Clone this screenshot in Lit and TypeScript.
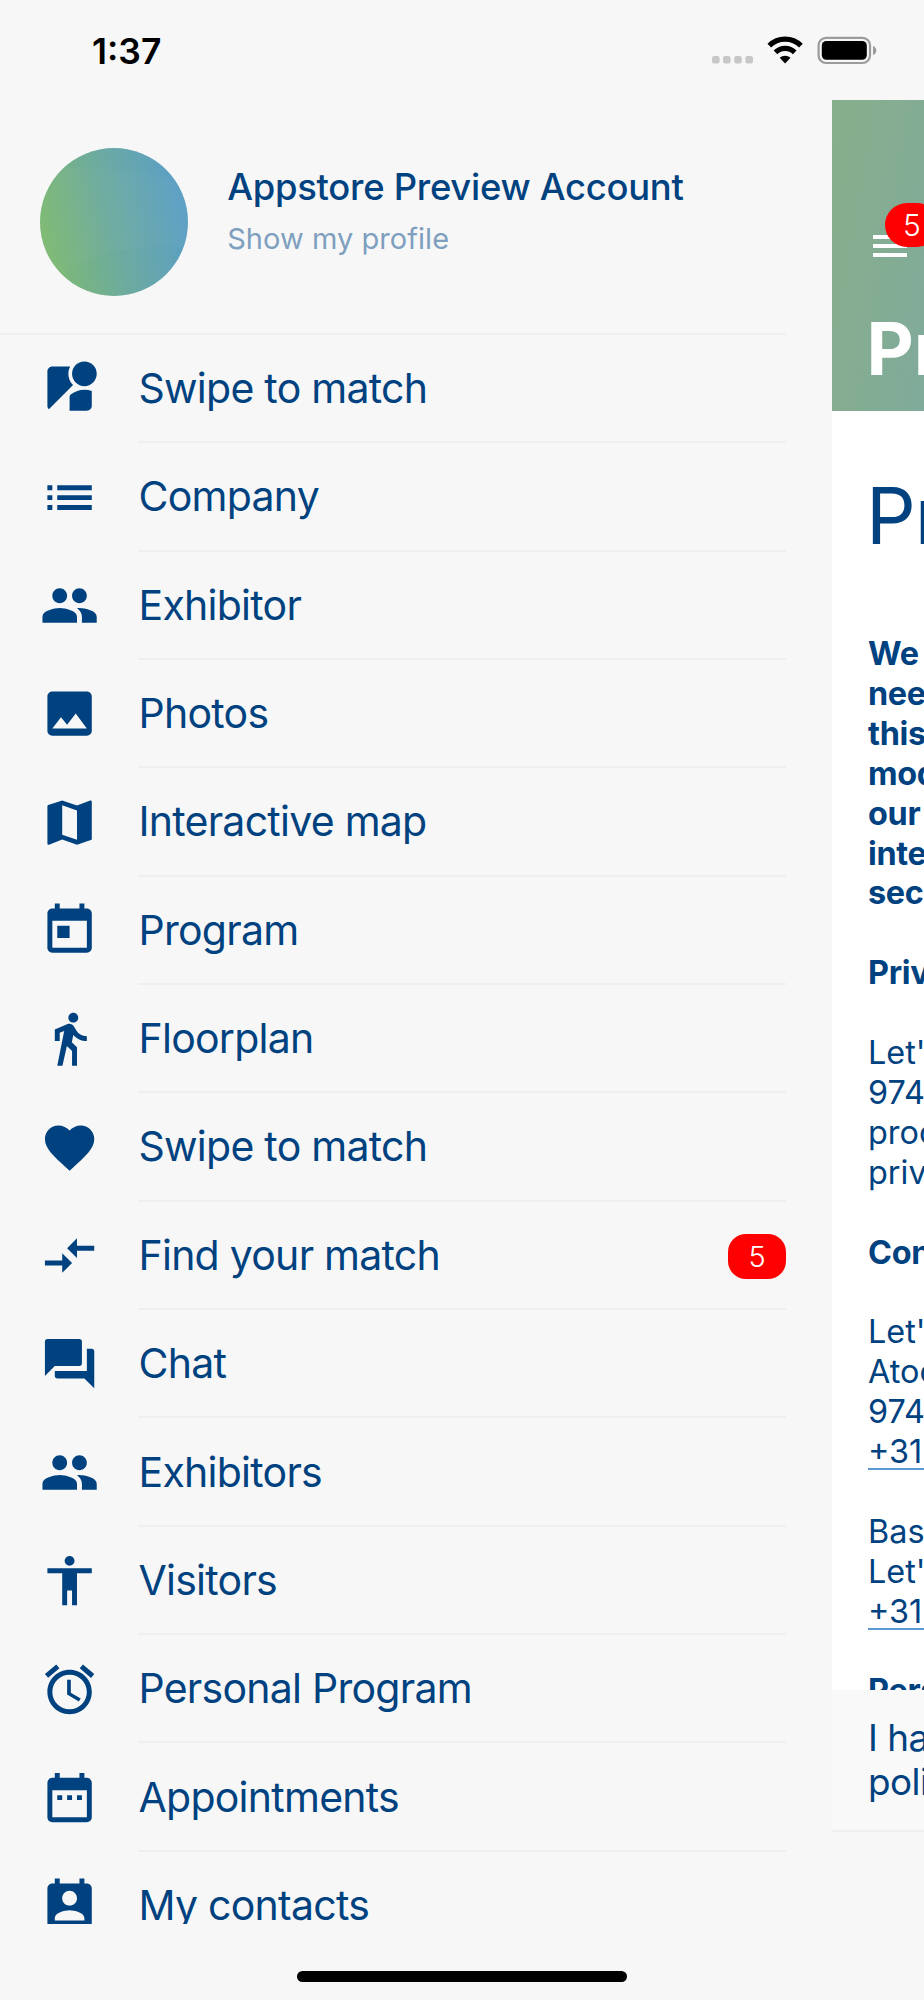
import { LitElement, html, css, svg } from "lit";
import { customElement } from "lit/decorators.js";

type Item = { label: string; icon: string; badge?: string };

const ICONS: Record<string, string> = {
  streetview:
    "M12.56 14.33c-.34.27-.56.7-.56 1.17V21h7c1.1 0 2-.9 2-2v-5.98c-.94-.33-1.95-.52-3-.52-2.03 0-3.93.7-5.44 1.83zM18 1a5 5 0 1 0 0 10a5 5 0 1 0 0-10zM11.5 6c0-1.08.27-2.1.74-3H5c-1.1 0-2 .9-2 2v14c0 .55.23 1.05.59 1.41l9.82-9.82C12.23 9.42 11.5 7.8 11.5 6z",
  list: "M3 13h2v-2H3v2zm0 4h2v-2H3v2zm0-8h2V7H3v2zm4 4h14v-2H7v2zm0 4h14v-2H7v2zM7 7v2h14V7H7z",
  people:
    "M16 11c1.66 0 2.99-1.34 2.99-3S17.66 5 16 5c-1.66 0-3 1.34-3 3s1.34 3 3 3zm-8 0c1.66 0 2.99-1.34 2.99-3S9.66 5 8 5C6.34 5 5 6.34 5 8s1.34 3 3 3zm0 2c-2.33 0-7 1.17-7 3.5V19h14v-2.5c0-2.33-4.67-3.5-7-3.5zm8 0c-.29 0-.62.02-.97.05 1.16.84 1.97 1.97 1.97 3.45V19h6v-2.5c0-2.33-4.67-3.5-7-3.5z",
  image:
    "M21 19V5c0-1.1-.9-2-2-2H5c-1.1 0-2 .9-2 2v14c0 1.1.9 2 2 2h14c1.1 0 2-.9 2-2zM8.5 13.5l2.5 3.01L14.5 12l4.5 6H5l3.5-4.5z",
  map: "M20.5 3l-.16.03L15 5.1 9 3 3.36 4.9c-.21.07-.36.25-.36.48V20.5c0 .28.22.5.5.5l.16-.03L9 18.9l6 2.1 5.64-1.9c.21-.07.36-.25.36-.48V3.5c0-.28-.22-.5-.5-.5zM15 19l-6-2.11V5l6 2.11V19z",
  today:
    "M19 3h-1V1h-2v2H8V1H6v2H5c-1.11 0-1.99.9-1.99 2L3 19c0 1.1.89 2 2 2h14c1.1 0 2-.9 2-2V5c0-1.1-.9-2-2-2zm0 16H5V8h14v11zM7 10h5v5H7z",
  walk: "M13.5 5.5c1.1 0 2-.9 2-2s-.9-2-2-2-2 .9-2 2 .9 2 2 2zM9.8 8.9L7 23h2.1l1.8-8 2.1 2v6h2v-7.5l-2.1-2 .6-3C14.8 12 16.8 13 19 13v-2c-1.9 0-3.5-1-4.3-2.4l-1-1.6c-.4-.6-1-1-1.7-1-.3 0-.5.1-.8.1L6 8.3V13h2V9.6l1.8-.7",
  heart:
    "M12 21.35l-1.45-1.32C5.4 15.36 2 12.28 2 8.5 2 5.42 4.42 3 7.5 3c1.74 0 3.41.81 4.5 2.09C13.09 3.81 14.76 3 16.5 3 19.58 3 22 5.42 22 8.5c0 3.78-3.4 6.86-8.55 11.54L12 21.35z",
  compare: "M9.01 14H2v2h7.01v3L13 15l-3.99-4v3zm5.98-1v-3H22V8h-7.01V5L11 9l3.99 4z",
  chat: "M21 6h-2v9H6v2c0 .55.45 1 1 1h11l4 4V7c0-.55-.45-1-1-1zm-4 6V3c0-.55-.45-1-1-1H3c-.55 0-1 .45-1 1v14l4-4h10c.55 0 1-.45 1-1z",
  person:
    "M12 2c1.1 0 2 .9 2 2s-.9 2-2 2-2-.9-2-2 .9-2 2-2zm9 7h-6v13h-2v-6h-2v6H9V9H3V7h18v2z",
  alarm:
    "M22 5.72l-4.6-3.86-1.29 1.53 4.6 3.86L22 5.72zM7.88 3.39L6.6 1.86 2 5.71l1.29 1.53 4.59-3.85zM12.5 8H11v6l4.75 2.85.75-1.23-4-2.37V8zM12 4c-4.97 0-9 4.03-9 9s4.02 9 9 9c4.97 0 9-4.03 9-9s-4.03-9-9-9zm0 16c-3.87 0-7-3.13-7-7s3.13-7 7-7 7 3.13 7 7-3.13 7-7 7z",
  dates:
    "M9 11H7v2h2v-2zm4 0h-2v2h2v-2zm4 0h-2v2h2v-2zm2-7h-1V2h-2v2H8V2H6v2H5c-1.11 0-1.99.9-1.99 2L3 20c0 1.1.89 2 2 2h14c1.1 0 2-.9 2-2V6c0-1.1-.9-2-2-2zm0 16H5V9h14v11z",
  contact:
    "M19 3h-1V1h-2v2H8V1H6v2H5c-1.11 0-2 .9-2 2v14c0 1.1.89 2 2 2h14c1.1 0 2-.9 2-2V5c0-1.1-.9-2-2-2zm-7 3c1.66 0 3 1.34 3 3s-1.34 3-3 3-3-1.34-3-3 1.34-3 3-3zm6 12H6v-1c0-2 4-3.1 6-3.1s6 1.1 6 3.1v1z",
};

const ITEMS: Item[] = [
  { label: "Swipe to match", icon: "streetview" },
  { label: "Company", icon: "list" },
  { label: "Exhibitor", icon: "people" },
  { label: "Photos", icon: "image" },
  { label: "Interactive map", icon: "map" },
  { label: "Program", icon: "today" },
  { label: "Floorplan", icon: "walk" },
  { label: "Swipe to match", icon: "heart" },
  { label: "Find your match", icon: "compare", badge: "5" },
  { label: "Chat", icon: "chat" },
  { label: "Exhibitors", icon: "people" },
  { label: "Visitors", icon: "person" },
  { label: "Personal Program", icon: "alarm" },
  { label: "Appointments", icon: "dates" },
  { label: "My contacts", icon: "contact" },
];

@customElement("status-bar")
class StatusBar extends LitElement {
  static styles = css`
    :host {
      display: flex;
      justify-content: space-between;
      height: 100px;
      box-sizing: border-box;
      padding: 30px 47px 0 92px;
    }
    .time {
      font-size: 35.5px;
      line-height: 43px;
      font-weight: 600;
      color: #000;
    }
    .status {
      display: block;
      width: 166px;
      height: 42px;
    }
  `;
  render() {
    return html`
      <span class="time">1:37</span>
      <svg class="status" viewBox="711 30 166 42">
        ${[712, 723, 734.2, 745.4].map(
          (x) => svg`<rect x=${x} y="56" width="7.6" height="7.4" rx="2.2" fill="#c7c7c7" />`
        )}
        <g fill="none" stroke="#000" stroke-width="5.2">
          <path d="M769.3 45.7a22.5 22.5 0 0 1 31.6 0" />
          <path d="M775.5 52.4a13.7 13.7 0 0 1 19.2 0" />
        </g>
        <path d="M785.1 63.4l-5.4-5.6a7.8 7.8 0 0 1 10.8 0z" />
        <rect x="818.6" y="37.8" width="51.4" height="25.2" rx="7.5" fill="none" stroke="#9b9b9b" stroke-width="2.2" />
        <rect x="821.8" y="41" width="45" height="18.8" rx="4.6" />
        <path d="M873 46c4.4 1.5 4.4 7.5 0 9z" fill="#9b9b9b" />
      </svg>
    `;
  }
}

@customElement("side-menu")
class SideMenu extends LitElement {
  static styles = css`
    :host {
      display: block;
      width: 786px;
      height: 1824px;
      overflow: hidden;
      color: #00427f;
    }
    .profile {
      display: flex;
      align-items: center;
      gap: 39.4px;
      box-sizing: border-box;
      width: 786px;
      height: 232.8px;
      padding: 11px 0 0 39.8px;
    }
    .avatar {
      flex: none;
      width: 148px;
      height: 148px;
    }
    .who {
      display: flex;
      flex-direction: column;
      gap: 7px;
      padding-bottom: 19px;
    }
    .name {
      font-size: 36.4px;
      line-height: 46px;
      font-weight: 500;
      letter-spacing: -0.26px;
    }
    .link {
      font-size: 29px;
      line-height: 44px;
      letter-spacing: 0.05px;
      color: #7f9fbf;
    }
    .item {
      display: flex;
      box-sizing: border-box;
      width: 786px;
      height: 108.36px;
      padding-left: 40px;
    }
    .icon {
      flex: none;
      width: 59.2px;
      height: 59.2px;
      margin: 26.4px 39.3px 0 0;
      fill: currentColor;
    }
    .cell {
      display: flex;
      align-items: center;
      justify-content: space-between;
      flex: none;
      width: 647.5px;
      box-sizing: border-box;
      border-top: 2px solid #efefef;
      font-size: 41px;
      line-height: 50px;
      letter-spacing: -0.74px;
    }
    .item:first-of-type .cell {
      border-top-color: transparent;
    }
    .rule {
      width: 786px;
      height: 2px;
      margin-bottom: -2px;
      background: #efefef;
    }
    .badge {
      width: 58px;
      height: 45px;
      margin-top: 3px;
      border-radius: 18px;
      background: #f00;
      color: #fff;
      font-size: 29px;
      font-weight: 350;
      line-height: 46px;
      text-align: center;
      letter-spacing: 0;
    }
  `;
  render() {
    return html`
      <header class="profile">
        <svg class="avatar" viewBox="0 0 148 148">
          <defs>
            <linearGradient id="fill" x1="0" y1="0.62" x2="1" y2="0.38">
              <stop offset="0.04" stop-color="#7cb974" />
              <stop offset="0.48" stop-color="#6dab9f" />
              <stop offset="0.96" stop-color="#5c9fc4" />
            </linearGradient>
            <clipPath id="round"><circle cx="74" cy="74" r="74" /></clipPath>
          </defs>
          <g clip-path="url(#round)">
            <rect width="148" height="148" fill="url(#fill)" />
            <path d="M0 22C50 16 100 20 148 38V100C110 94 60 104 30 120L0 148z" fill="#fff" opacity="0.025" />
          </g>
        </svg>
        <div class="who">
          <span class="name">Appstore Preview Account</span>
          <span class="link">Show my profile</span>
        </div>
      </header>
      <div class="rule"></div>
      <nav>
        ${ITEMS.map(
          (i) => html`<div class="item">
            <svg class="icon" viewBox="0 0 24 24"><path d=${ICONS[i.icon]} /></svg>
            <div class="cell">
              <span>${i.label}</span>
              ${i.badge ? html`<span class="badge">${i.badge}</span>` : ""}
            </div>
          </div>`
        )}
      </nav>
    `;
  }
}

@customElement("policy-page")
class PolicyPage extends LitElement {
  static styles = css`
    :host {
      display: flex;
      flex-direction: column;
      width: 92px;
      height: 1732px;
      overflow: hidden;
      white-space: nowrap;
      color: #00427f;
      background: #fff;
    }
    .bar {
      position: relative;
      flex: none;
      box-sizing: border-box;
      height: 311px;
      padding: 135px 0 0 40.5px;
      color: #fff;
      background: linear-gradient(100deg, #87af8b, #80aa9a);
    }
    .burger {
      display: flex;
      flex-direction: column;
      gap: 5px;
      width: 34px;
    }
    .burger span {
      height: 4px;
      background: #fff;
    }
    .badge {
      position: absolute;
      left: 53px;
      top: 102.5px;
      width: 54px;
      height: 44px;
      border-radius: 22px;
      background: #f00;
      font-size: 30px;
      font-weight: 350;
      line-height: 45px;
      text-align: center;
    }
    .title {
      margin: 46.5px 0 0 -6px;
      font-size: 73px;
      line-height: 90px;
      font-weight: 700;
    }
    .body {
      flex: 1;
      overflow: hidden;
      padding-left: 36px;
      font-size: 32.4px;
      line-height: 39.9px;
    }
    .heading {
      margin: 57px 0 70px -2px;
      font-size: 78px;
      line-height: 96px;
      font-weight: 400;
      letter-spacing: -1px;
    }
    p {
      margin: 0 0 39.9px;
    }
    .strong {
      font-weight: 700;
      letter-spacing: -0.3px;
    }
    .tel {
      display: block;
      color: inherit;
      text-decoration: underline;
      text-decoration-color: #5b9bd5;
      text-decoration-thickness: 2px;
      text-underline-offset: 5px;
    }
    .agree {
      flex: none;
      box-sizing: border-box;
      height: 142px;
      padding: 26px 0 0 36px;
      border-bottom: 2px solid #efefef;
      background: #f9f9f9;
      font-size: 36.8px;
      line-height: 44.2px;
      letter-spacing: -0.5px;
    }
  `;
  render() {
    return html`
      <header class="bar">
        <div class="burger"><span></span><span></span><span></span></div>
        <span class="badge">5</span>
        <div class="title">Pr</div>
      </header>
      <section class="body">
        <h1 class="heading">Pr</h1>
        <p class="strong">We<br />need<br />this<br />mod<br />our<br />inte<br />sec</p>
        <p class="strong">Priv</p>
        <p>Let's<br />974<br />proc<br />priv</p>
        <p class="strong">Con</p>
        <p>Let's<br />Atoc<br />974<br /><a class="tel">+31 6</a></p>
        <p>Bas<br />Let's<br /><a class="tel">+31 6</a></p>
        <p class="strong">Pers</p>
      </section>
      <footer class="agree">I ha<br />poli</footer>
    `;
  }
}

@customElement("app-root")
class AppRoot extends LitElement {
  static styles = css`
    :host {
      display: flex;
      flex-direction: column;
      width: 924px;
      height: 2000px;
      overflow: hidden;
      background: #f7f7f7;
      font-family: Inter, "Liberation Sans", sans-serif;
    }
    .main {
      display: flex;
      gap: 46px;
      height: 1824px;
    }
    .home {
      width: 330px;
      height: 11px;
      margin: 47px 0 0 297px;
      border-radius: 6px;
      background: #000;
    }
  `;
  render() {
    return html`
      <status-bar></status-bar>
      <div class="main">
        <side-menu></side-menu>
        <policy-page></policy-page>
      </div>
      <div class="home"></div>
    `;
  }
}
